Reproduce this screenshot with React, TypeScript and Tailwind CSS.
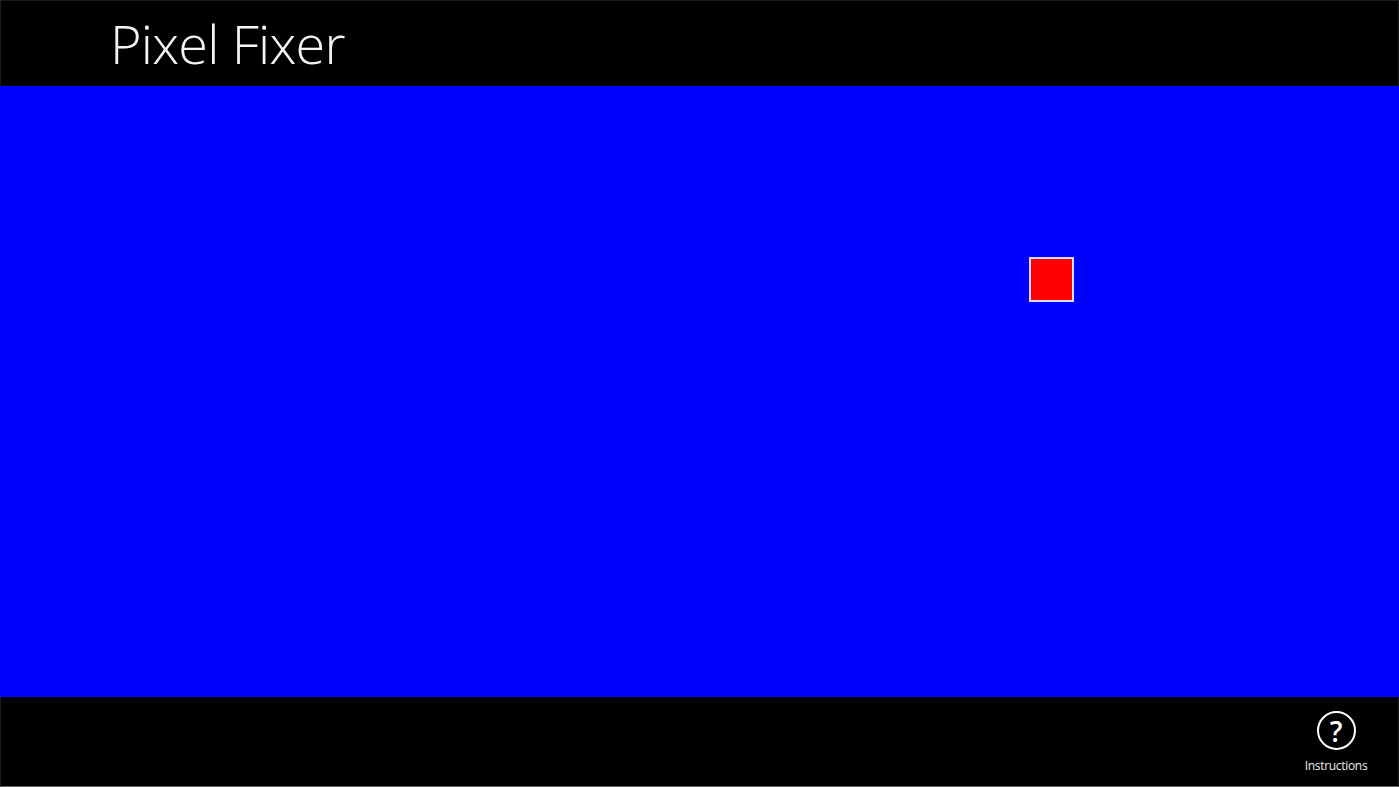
export default function App() {
  return (
    <div className="flex flex-col w-[1399px] h-[787px] overflow-hidden bg-black font-['Open_Sans',sans-serif]">
      <div className="h-[86px] shrink-0 pl-[109px] border-t border-x border-[#1c1c1c]">
        <h1 className="text-[54px] leading-[84px] font-light text-[#f4f4f4] tracking-[-0.8px]">Pixel Fixer</h1>
      </div>
      <div className="relative flex-1 bg-[#0000ff]">
        <div className="absolute left-[1029px] top-[171px] w-[45px] h-[45px] bg-[#ff0000] border-2 border-[#dcdcff]" />
      </div>
      <div className="h-[90px] shrink-0 flex justify-end pr-[30px] pt-[14px] border-b border-x border-b-[#666] border-x-[#1c1c1c]">
        <button className="flex flex-col items-center w-[64px]">
          <span className="flex items-center justify-center w-[39px] h-[39px] rounded-full border-2 border-white text-white text-[28px] leading-none font-semibold">?</span>
          <span className="mt-[7px] text-[12px] leading-[18px] tracking-[-0.3px] text-[#eeeeee]">Instructions</span>
        </button>
      </div>
    </div>
  );
}
